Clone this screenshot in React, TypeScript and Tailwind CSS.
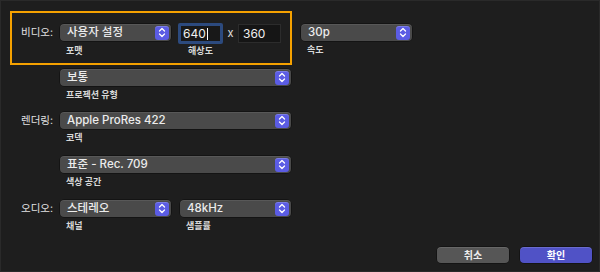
import React from "react";

function Stepper({ className = "" }: { className?: string }) {
  return (
    <span
      className={`flex h-[14px] w-[14px] items-center justify-center rounded-[3px] bg-[#5b5ce4] shadow-[inset_0_1px_0_rgba(255,255,255,0.2)] ${className}`}
    >
      <svg width="8" height="11" viewBox="0 0 8 11" fill="none">
        <path d="M1.5 4 L4 1.5 L6.5 4" stroke="white" strokeWidth="1.3" strokeLinecap="round" strokeLinejoin="round" />
        <path d="M1.5 7 L4 9.5 L6.5 7" stroke="white" strokeWidth="1.3" strokeLinecap="round" strokeLinejoin="round" />
      </svg>
    </span>
  );
}

function Popup({ text, width }: { text: string; width: string }) {
  return (
    <div
      className={`${width} flex h-[17px] items-center justify-between rounded-[4px] bg-[#4a4a4a] pl-[7px] pr-[2px] text-[11.5px] font-medium text-[#ececec] shadow-[0_0_0_0.5px_rgba(0,0,0,0.6),inset_0_1px_0_rgba(255,255,255,0.08)]`}
    >
      <span className="leading-none">{text}</span>
      <Stepper />
    </div>
  );
}

function Caption({ children, className = "" }: { children: React.ReactNode; className?: string }) {
  return (
    <div className={`text-[9px] font-bold leading-[10px] text-[#d8d8d8] ${className}`}>{children}</div>
  );
}

function Field({ text, width, caption }: { text: string; width: string; caption: string }) {
  return (
    <div className="flex flex-col">
      <Popup text={text} width={width} />
      <Caption className="mt-[4px] pl-[6px]">{caption}</Caption>
    </div>
  );
}

function RowLabel({ children }: { children?: React.ReactNode }) {
  return (
    <div className="flex h-[17px] w-[43px] shrink-0 items-center justify-end text-[10.5px] text-[#e2e2e2]">
      {children}
    </div>
  );
}

export default function App() {
  return (
    <div className="flex h-[272px] w-[600px] flex-col border border-[#2a2a2a] bg-[#1e1e1e] font-[Inter,'Noto_Sans_CJK_KR',sans-serif] text-white">
      <div className="flex flex-col pl-[9px] pt-[10px]">
        {/* video row */}
        <div className="flex items-start">
          <div className="flex h-[54px] w-[282px] items-start border-2 border-[#f5a100] pt-[11px]">
            <div className="flex h-[17px] w-[41px] items-center justify-end text-[10.5px] text-[#e2e2e2]">
              비디오:
            </div>
            <div className="ml-[7px] flex flex-col">
              <Popup text="사용자 설정" width="w-[111px]" />
              <Caption className="mt-[5px] pl-[6px]">포맷</Caption>
            </div>
            <div className="ml-[7px] mt-[-1px] flex flex-col">
              <div className="flex items-center">
                <div className="flex h-[21px] w-[45px] items-center rounded-[2px] border-[3px] border-[#2c4a7e] bg-[#181818] pl-[2px] text-[12px] text-[#f0f0f0]">
                  640<span className="ml-[1px] inline-block h-[12px] w-[1px] bg-white" />
                </div>
                <span className="w-[15px] text-center text-[11px] text-[#e0e0e0]">x</span>
                <div className="flex h-[19px] w-[43px] items-center border border-[#2c2c2c] bg-[#151515] pl-[4px] text-[12px] text-[#f0f0f0]">
                  360
                </div>
              </div>
              <Caption className="mt-[2px] w-[45px] text-center">해상도</Caption>
            </div>
          </div>
          <div className="ml-[9px] mt-[13px]">
            <Field text="30p" width="w-[111px]" caption="속도" />
          </div>
        </div>

        {/* projection */}
        <div className="mt-[4px] flex items-start gap-[7px]">
          <RowLabel />
          <Field text="보통" width="w-[231px]" caption="프로젝션 유형" />
        </div>

        {/* render */}
        <div className="mt-[12px] flex items-start gap-[7px]">
          <RowLabel>렌더링:</RowLabel>
          <Field text="Apple ProRes 422" width="w-[231px]" caption="코덱" />
        </div>

        <div className="mt-[13px] flex items-start gap-[7px]">
          <RowLabel />
          <Field text="표준 - Rec. 709" width="w-[231px]" caption="색상 공간" />
        </div>

        {/* audio */}
        <div className="mt-[13px] flex items-start gap-[7px]">
          <RowLabel>오디오:</RowLabel>
          <Field text="스테레오" width="w-[111px]" caption="채널" />
          <div className="ml-[2px]">
            <Field text="48kHz" width="w-[111px]" caption="샘플률" />
          </div>
        </div>
      </div>

      <div className="mt-auto flex justify-end gap-[11px] pb-[8px] pr-[7px]">
        <button className="flex h-[16px] w-[72px] items-center justify-center rounded-[4px] bg-[#565656] text-[10px] font-bold text-[#eeeeee] shadow-[0_0_0_0.5px_rgba(0,0,0,0.6),inset_0_1px_0_rgba(255,255,255,0.1)]">
          취소
        </button>
        <button className="flex h-[16px] w-[72px] items-center justify-center rounded-[4px] bg-[#5052c6] text-[10px] font-bold text-white shadow-[0_0_0_0.5px_rgba(0,0,0,0.6),inset_0_1px_0_rgba(255,255,255,0.15)]">
          확인
        </button>
      </div>
    </div>
  );
}
